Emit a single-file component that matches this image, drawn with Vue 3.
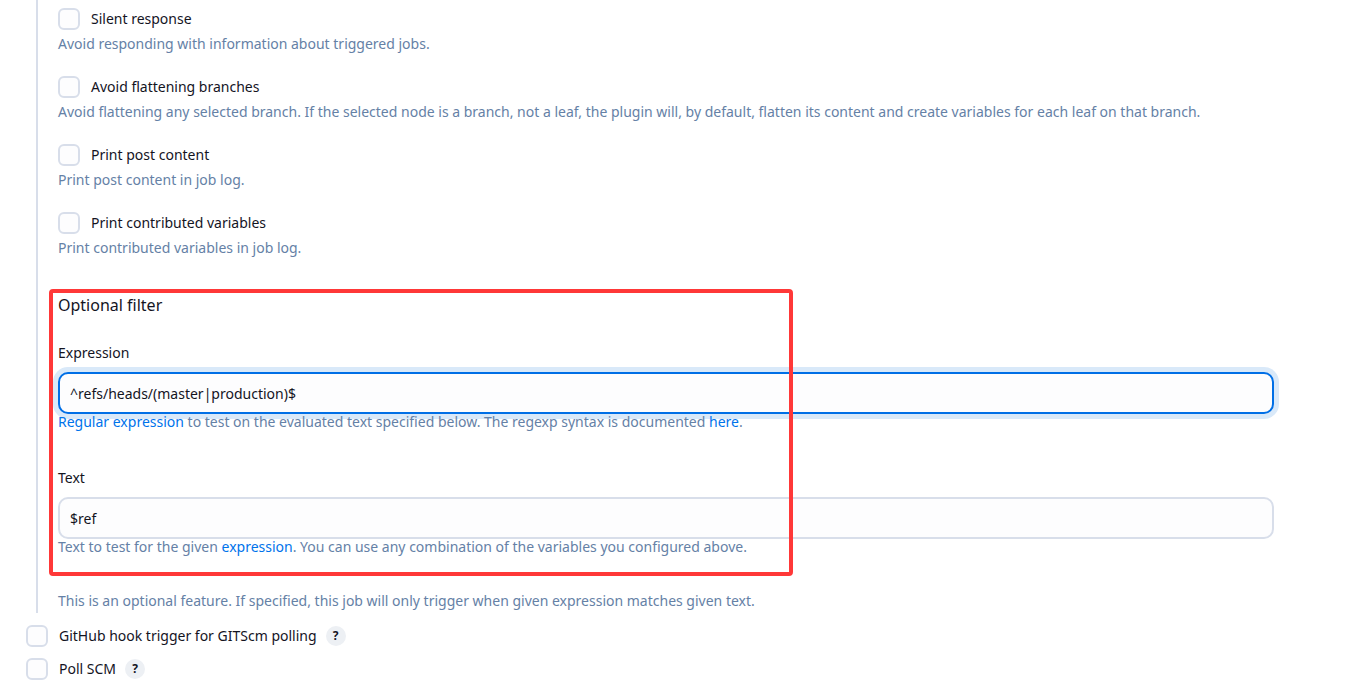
<script setup>
import { ref } from 'vue'

const options = ref([
  { id: 'silent', label: 'Silent response', help: 'Avoid responding with information about triggered jobs.', checked: false },
  { id: 'flatten', label: 'Avoid flattening branches', help: 'Avoid flattening any selected branch. If the selected node is a branch, not a leaf, the plugin will, by default, flatten its content and create variables for each leaf on that branch.', checked: false },
  { id: 'post', label: 'Print post content', help: 'Print post content in job log.', checked: false },
  { id: 'vars', label: 'Print contributed variables', help: 'Print contributed variables in job log.', checked: false }
])
const triggers = ref([
  { id: 'github', label: 'GitHub hook trigger for GITScm polling', checked: false },
  { id: 'poll', label: 'Poll SCM', checked: false }
])
const expression = ref('^refs/heads/(master|production)$')
const text = ref('$ref')
</script>

<template>
  <main class="page">
    <section class="nested">
      <div class="options">
        <div v-for="o in options" :key="o.id" class="option">
          <div class="check">
            <input :id="o.id" v-model="o.checked" type="checkbox" />
            <label :for="o.id">{{ o.label }}</label>
          </div>
          <p class="help">{{ o.help }}</p>
        </div>
      </div>

      <div class="filter">
        <h2>Optional filter</h2>
        <div class="field">
          <label for="expression">Expression</label>
          <input id="expression" v-model="expression" class="active" type="text" />
          <p class="help"><a href="#">Regular expression</a> to test on the evaluated text specified below. The regexp syntax is documented <a href="#">here</a>.</p>
        </div>
        <div class="field">
          <label for="text">Text</label>
          <input id="text" v-model="text" type="text" />
          <p class="help">Text to test for the given <a href="#">expression</a>. You can use any combination of the variables you configured above.</p>
        </div>
        <div class="highlight"></div>
      </div>
      <p class="help note">This is an optional feature. If specified, this job will only trigger when given expression matches given text.</p>
    </section>

    <div class="triggers">
      <div v-for="t in triggers" :key="t.id" class="check">
        <input :id="t.id" v-model="t.checked" type="checkbox" />
        <label :for="t.id">{{ t.label }}</label>
        <button type="button" :aria-label="'Help for ' + t.label">?</button>
      </div>
    </div>
  </main>
</template>

<style>
body {
  margin: 0;
  background: #fff;
}
</style>

<style scoped>
.page {
  padding: 0 84px 14px 26px;
  color: #14141f;
  font-family: "Segoe UI", "Noto Sans", "Open Sans", sans-serif;
  font-size: 14px;
  line-height: 22px;
}
.nested {
  margin-left: 10px;
  padding: 8px 0 4px 20px;
  border-left: 2px solid #d8deea;
}
.options {
  display: grid;
  gap: 24px;
}
.check {
  display: flex;
  align-items: center;
}
.check input {
  appearance: none;
  box-sizing: border-box;
  width: 22px;
  height: 22px;
  margin: 0 11px 0 0;
  border: 2px solid #d8deea;
  border-radius: 6px;
  background: #fdfdfe;
}
.check input:checked {
  border-color: #006fe6;
  background: #006fe6;
}
.help {
  margin: 0;
  color: #6581a6;
  line-height: 16px;
}
.option .help {
  margin-top: 6px;
}
.help a {
  color: #0073eb;
  text-decoration: none;
}
.filter {
  position: relative;
  margin-top: 37px;
}
h2 {
  margin: 0;
  font-size: 16px;
  font-weight: 400;
  line-height: 24px;
}
.field {
  margin-top: 25px;
}
.field + .field {
  margin-top: 37px;
}
.field label {
  display: block;
  margin-bottom: 8px;
}
.field input {
  display: block;
  box-sizing: border-box;
  width: 100%;
  height: 42px;
  padding: 0 10px;
  border: 2px solid #d8deea;
  border-radius: 10px;
  outline: none;
  background: #fdfdfe;
  color: inherit;
  font: inherit;
}
.field input.active {
  border-color: #006fe6;
  box-shadow: 0 0 0 5px #d9e9f9;
}
.highlight {
  position: absolute;
  box-sizing: border-box;
  top: -4px;
  bottom: -21px;
  left: -9px;
  width: 744px;
  border: 4px solid #ff3838;
  border-radius: 4px;
  pointer-events: none;
}
.note {
  margin-top: 38px;
}
.triggers {
  display: grid;
  gap: 11px;
  margin-top: 12px;
}
.check button {
  width: 20px;
  height: 20px;
  margin-left: 9px;
  padding: 0;
  border: 0;
  border-radius: 50%;
  background: #edf0f4;
  color: #14141f;
  font: 700 12px/20px "Noto Sans", sans-serif;
}
</style>
